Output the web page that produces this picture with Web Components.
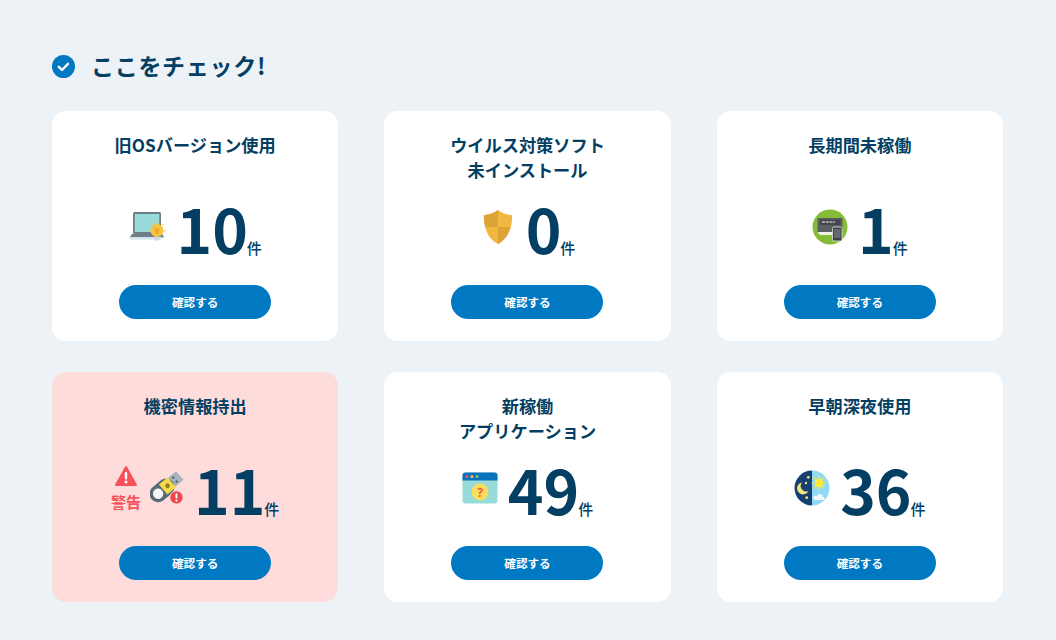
<!DOCTYPE html>
<html lang="ja"><head><meta charset="utf-8">
<style>
html,body{margin:0;padding:0;background:#edf2f6}
body{font-family:"Noto Sans CJK JP","Noto Sans",sans-serif;color:#043f63;width:1056px;height:640px;overflow:hidden}
check-page{display:block}
svg{display:block}
svg[slot=icon]{margin-bottom:3px}
</style></head><body>
<check-page>
<check-heading>ここをチェック!</check-heading>
<check-grid>
<check-card count="10"><span slot="title">旧OSバージョン使用</span>
<svg slot="icon" width="38" height="34" viewBox="0 0 38 34"><path d="M1 28h30l2 2H3z" fill="#e2ecf2"/><rect x="5" y="2" width="28" height="22" rx="1.500" fill="#6d7d86"/><rect x="6.800" y="4" width="24.500" height="18" fill="#97dcd8"/><path d="M4 24h30l2 3H2z" fill="#707f88"/><path d="M1 27h36l-1.500 1.500h-33z" fill="#cddfe9"/><g stroke="#f7c53d" stroke-width="1.200"><path d="M29 11v2M22.500 14l1.500 1M35.500 14 34 15M20.500 21h2M37.500 21h-2"/></g><circle cx="29" cy="20.500" r="6.500" fill="#f7c53d"/><path d="M26 18.500h6l-2 5.500h-2z" fill="#eda82c"/><rect x="26.800" y="26.500" width="4.400" height="4" rx="1" fill="#c8d6de"/></svg>
</check-card>
<check-card count="0"><span slot="title">ウイルス対策ソフト<br>未インストール</span>
<svg slot="icon" width="36" height="36" viewBox="-3 0 38 38"><path d="M16 1c4 3 9 5 15 5.500C31 20 27 31 16 37 5 31 1 20 1 6.500 7 6 12 4 16 1z" fill="#f0b840"/><path d="M16 1C12 4 7 6 1 6.500 1 11 1.500 15.500 3 19h13zM16 19h13c-2 8-6 14-13 18z" fill="#dca437"/></svg>
</check-card>
<check-card count="1"><span slot="title">長期間未稼働</span>
<svg slot="icon" width="36" height="36" viewBox="0 0 36 36"><circle cx="18" cy="18" r="17.500" fill="#84bd35"/><rect x="5.500" y="9" width="25" height="14" fill="#5b5e63"/><rect x="7.500" y="10.500" width="21" height="5.500" fill="#45484d"/><path d="M10 13h13" stroke="#b8bbbe" stroke-width="1.500" stroke-dasharray="3 .8"/><path d="M5.500 23h16v3H8z" fill="#eef3ea"/><rect x="20.500" y="18" width="9.500" height="14" rx="1.500" fill="#3e4145" stroke="#e8ecef" stroke-width=".8"/><rect x="22" y="20" width="6.500" height="9" fill="#66696e"/></svg>
</check-card>
<check-card count="11" alert><span slot="title">機密情報持出</span>
<warn-mark slot="lead">警告</warn-mark>
<svg slot="icon" width="34" height="34" viewBox="0 0 36 36"><g transform="rotate(-40 17 17)"><rect x="25" y="11" width="11" height="12" fill="#a8b4bb"/><rect x="28" y="13" width="2.500" height="2.500" fill="#5f6f78"/><rect x="28" y="18.500" width="2.500" height="2.500" fill="#5f6f78"/><rect x="-3" y="8" width="29" height="18" rx="9" fill="#566a74"/><circle cx="6" cy="17" r="5.500" fill="#f4f6f7"/><rect x="13" y="10" width="12" height="14" fill="#f4da4c"/><circle cx="19" cy="17" r="2.500" fill="#8f8420"/></g><circle cx="28" cy="28" r="7" fill="#f0464e" stroke="#ffdcdc"/><rect x="27" y="23.500" width="2" height="5.500" rx="1" fill="#fff"/><circle cx="28" cy="31.300" r="1.200" fill="#fff"/></svg>
</check-card>
<check-card count="49"><span slot="title">新稼働<br>アプリケーション</span>
<svg slot="icon" width="36" height="32" viewBox="0 0 36 32"><rect x=".5" y=".5" width="35" height="31" rx="3" fill="#98dad8"/><path d="M.5 8.500V3.500a3 3 0 0 1 3-3h29a3 3 0 0 1 3 3v5z" fill="#0a72bb"/><circle cx="5" cy="4.500" r="1.500" fill="#f0565f"/><circle cx="10" cy="4.500" r="1.500" fill="#f5c33d"/><circle cx="15" cy="4.500" r="1.500" fill="#7dcb6e"/><circle cx="18" cy="20" r="8.500" fill="#f8de5a"/><text x="18" y="24.500" font-size="12" font-weight="700" text-anchor="middle" fill="#ee5a4d" font-family="Noto Sans">?</text></svg>
</check-card>
<check-card count="36"><span slot="title">早朝深夜使用</span>
<svg slot="icon" width="36" height="36" viewBox="0 0 36 36"><path d="M18 .5a17.500 17.500 0 0 0 0 35z" fill="#173f6f"/><path d="M18 .5a17.500 17.500 0 0 1 0 35z" fill="#8fd8f6"/><path d="M8 12.500a6 6 0 1 0 6.500 8.500 5.500 5.500 0 0 1-6.500-8.500z" fill="#f6e27a"/><circle cx="14.300" cy="7.300" r="1.400" fill="#f6e27a"/><circle cx="12" cy="13" r="1.200" fill="#f6e27a"/><circle cx="12.700" cy="27.700" r="1.400" fill="#f6e27a"/><circle cx="25" cy="13" r="4.500" fill="#fbe83f"/><g stroke="#fbe83f" stroke-width="1.200"><path d="M25 5.500v2.500M25 18v2.500M17.500 13h2.500M30 13h2.500M19.700 7.700l1.800 1.800M28.500 16.500l1.800 1.800M30.300 7.700l-1.800 1.800M21.500 16.500l-1.800 1.800"/></g><path d="M19.500 29c-1.500-3 2-4.500 3.500-3 1-3 6-2.500 6 1 2.500 0 2.500 3-.5 3H21z" fill="#f5f9fb"/></svg>
</check-card>
</check-grid>
</check-page>
<script>
function define(name,html,init){customElements.define(name,class extends HTMLElement{
 constructor(){super();this.attachShadow({mode:'open'}).innerHTML=html;}
 connectedCallback(){if(init)init(this);}
});}
define('check-page',`<style>:host{display:block;box-sizing:border-box;padding:52px 53px 0 52px}</style><slot></slot>`);
define('check-heading',`<style>
:host{display:flex;align-items:center;gap:16px;height:28px;margin-bottom:31px;font-size:23px;font-weight:700;letter-spacing:.7px;line-height:26px;color:#043f63}
svg{display:block;flex:none}
span{margin-top:-2px}
</style><svg width="23" height="23" viewBox="0 0 23 23"><circle cx="11.500" cy="11.500" r="11.500" fill="#0079c2"/><path d="M6.800 11.800l3.200 3.200 6-6.200" fill="none" stroke="#fff" stroke-width="2.400" stroke-linecap="round" stroke-linejoin="round"/></svg><span><slot></slot></span>`);
define('check-grid',`<style>:host{display:grid;grid-template-columns:repeat(3,1fr);column-gap:46px;row-gap:31px}</style><slot></slot>`);
define('warn-mark',`<style>
:host{display:flex;flex-direction:column;align-items:center;gap:5px;font-size:15px;font-weight:700;line-height:20px;color:#f5525a;margin:0 -1px -2px 0}
</style><svg width="24" height="22" viewBox="0 0 24 22" style="display:block;margin-top:-3px"><path d="M12 2 22 20H2z" fill="#f5525a" stroke="#f5525a" stroke-width="2" stroke-linejoin="round"/><rect x="10.800" y="7" width="2.400" height="7.500" rx="1" fill="#fff"/><circle cx="12" cy="17" r="1.500" fill="#fff"/></svg><span><slot></slot></span>`);
define('check-card',`<style>
:host{display:flex;flex-direction:column;align-items:center;box-sizing:border-box;height:230px;padding:21px 0 22px;background:#fff;border-radius:14px}
:host([alert]){background:#ffdcdc}
.title{flex:none;height:50px;font-size:17.200px;font-weight:700;line-height:25px;text-align:center;color:#043f63}
.metric{flex:none;display:flex;align-items:center;justify-content:center;height:70px;margin-top:11px;gap:10px}
.count{display:flex;align-items:baseline}
.num{font-size:60.500px;font-weight:700;line-height:70px;color:#043f63}
.unit{font-size:15px;font-weight:500;line-height:20px;margin-left:-1px;color:#043f63}
button{all:unset;flex:none;box-sizing:border-box;display:block;width:152px;height:34px;margin-top:22px;border-radius:17px;background:#0079c2;color:#fff;font:700 11.600px/34px "Noto Sans CJK JP",sans-serif;text-align:center}
</style><div class="title"><slot name="title"></slot></div>
<div class="metric"><slot name="lead"></slot><slot name="icon"></slot><div class="count"><span class="num"></span><span class="unit">件</span></div></div>
<button>確認する</button>`,el=>{el.shadowRoot.querySelector('.num').textContent=el.getAttribute('count');});
</script>
</body></html>
